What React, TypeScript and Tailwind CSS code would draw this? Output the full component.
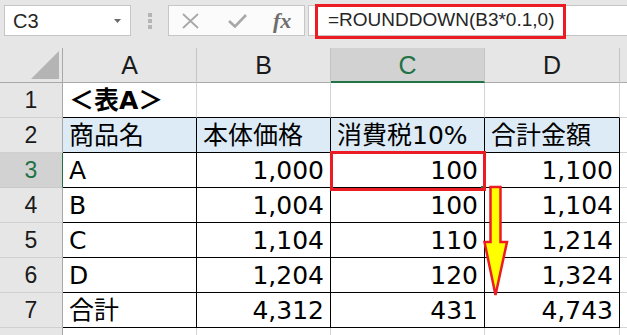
import React from "react";

type Cell = { text?: string; right?: boolean; bold?: boolean };

const cellFont = "font-['DejaVu_Sans','Noto_Sans_CJK_JP',sans-serif]";

const colWidths = ["w-[134px]", "w-[134px]", "w-[154px]", "w-[135px]"];
const colLetters = ["A", "B", "C", "D"];

const rows: { n: number; cells: Cell[] }[] = [
    { n: 1, cells: [{ text: "＜表A＞", bold: true }, {}, {}, {}] },
    {
        n: 2,
        cells: [
            { text: "商品名" },
            { text: "本体価格" },
            { text: "消費税10%" },
            { text: "合計金額" },
        ],
    },
    {
        n: 3,
        cells: [
            { text: "A" },
            { text: "1,000", right: true },
            { text: "100", right: true },
            { text: "1,100", right: true },
        ],
    },
    {
        n: 4,
        cells: [
            { text: "B" },
            { text: "1,004", right: true },
            { text: "100", right: true },
            { text: "1,104", right: true },
        ],
    },
    {
        n: 5,
        cells: [
            { text: "C" },
            { text: "1,104", right: true },
            { text: "110", right: true },
            { text: "1,214", right: true },
        ],
    },
    {
        n: 6,
        cells: [
            { text: "D" },
            { text: "1,204", right: true },
            { text: "120", right: true },
            { text: "1,324", right: true },
        ],
    },
    {
        n: 7,
        cells: [
            { text: "合計" },
            { text: "4,312", right: true },
            { text: "431", right: true },
            { text: "4,743", right: true },
        ],
    },
];

function FormulaBar() {
    return (
        <div className="flex h-[48px] items-start pt-[5px] pl-[4px]">
            {/* name box */}
            <div className="flex h-[31px] w-[127px] items-center justify-between border border-[#c6c6c6] bg-white pl-[8px] pr-[9px]">
                <span className="font-['Liberation_Sans',sans-serif] text-[20px] text-[#262626]">
                    C3
                </span>
                <svg width="7" height="4" viewBox="0 0 7 4">
                    <polygon points="0,0 7,0 3.5,4" fill="#6b6b6b" />
                </svg>
            </div>
            <div className="flex h-[31px] w-[37px] flex-col items-center justify-center gap-[2px]">
                <div className="h-[4px] w-[4px] bg-[#b5b5b5]" />
                <div className="h-[4px] w-[4px] bg-[#b5b5b5]" />
                <div className="h-[4px] w-[4px] bg-[#b5b5b5]" />
            </div>
            {/* cancel / enter / fx */}
            <div className="flex h-[31px] w-[137px] items-center border border-[#c6c6c6] bg-[#fbfbfb]">
                <svg className="ml-[13px]" width="17" height="16" viewBox="0 0 17 16">
                    <path d="M1 1 L16 15 M16 1 L1 15" stroke="#a8a8a8" strokeWidth="1.8" />
                </svg>
                <svg className="ml-[29px]" width="19" height="14" viewBox="0 0 19 14">
                    <path d="M1 7 L7 12.5 L18 1" stroke="#a8a8a8" strokeWidth="2.6" fill="none" />
                </svg>
                <span className="ml-[26px] font-['Liberation_Serif',serif] text-[22px] font-bold italic leading-none text-[#6e6e6e]">
                    fx
                </span>
            </div>
            <div className="ml-[3px] flex h-[31px] flex-1 items-center border border-r-0 border-[#c6c6c6] bg-white pl-[19px]">
                <span className="font-['Liberation_Sans',sans-serif] text-[19px] text-[#262626]">
                    =ROUNDDOWN(B3*0.1,0)
                </span>
            </div>
        </div>
    );
}

function ColumnHeaders() {
    return (
        <div className="flex h-[35px]">
            <div className="relative h-[35px] w-[63px] border-r border-b border-[#a8a8a8]">
                <svg className="absolute right-[3px] bottom-[3px]" width="28" height="28" viewBox="0 0 28 28">
                    <polygon points="28,0 28,28 0,28" fill="#b4b4b4" />
                </svg>
            </div>
            {colLetters.map((l, i) =>
                l === "C" ? (
                    <div
                        key={l}
                        className={`${colWidths[i]} flex h-[35px] items-center justify-center border-r border-b-2 border-r-[#c4c4c4] border-b-[#217346] bg-[#d2d2d2] pt-[2px] font-['Liberation_Sans',sans-serif] text-[25px] text-[#217346]`}
                    >
                        {l}
                    </div>
                ) : (
                    <div
                        key={l}
                        className={`${colWidths[i]} flex h-[35px] items-center justify-center border-r border-b border-r-[#c4c4c4] border-b-[#ababab] pt-[2px] font-['Liberation_Sans',sans-serif] text-[25px] text-[#1a1a1a]`}
                    >
                        {l}
                    </div>
                )
            )}
            <div className="h-[35px] flex-1 border-b border-[#ababab]" />
        </div>
    );
}

function SheetRow({ n, cells }: { n: number; cells: Cell[] }) {
    const inTable = n >= 2;
    const active = n === 3;
    return (
        <div className="flex h-[35px]">
            <div
                className={
                    active
                        ? "flex h-[35px] w-[63px] items-center justify-center border-r border-b border-r-[#217346] border-b-[#c8c8c8] bg-[#d2d2d2] pt-[1px] font-['Liberation_Sans',sans-serif] text-[23px] text-[#217346]"
                        : "flex h-[35px] w-[63px] items-center justify-center border-r border-b border-r-[#a8a8a8] border-b-[#d0d0d0] pt-[1px] font-['Liberation_Sans',sans-serif] text-[23px] text-[#1a1a1a]"
                }
            >
                {n}
            </div>
            {cells.map((c, i) => (
                <div
                    key={i}
                    className={`${colWidths[i]} flex h-[35px] items-center overflow-hidden whitespace-nowrap border-r border-b border-b-black px-[6px] pt-[2px] ${cellFont} text-[25px] text-black ${
                        inTable ? "border-r-black" : "border-r-[#d4d4d4]"
                    } ${n === 2 ? "bg-[#ddebf7]" : "bg-white"} ${c.right ? "justify-end" : "justify-start"} ${
                        c.bold ? "font-bold" : ""
                    }`}
                >
                    {c.text}
                </div>
            ))}
            <div className="h-[35px] flex-1 border-b border-[#d4d4d4] bg-white" />
        </div>
    );
}

export default function App() {
    return (
        <div className="relative h-[335px] w-[627px] overflow-hidden bg-[#e6e6e6]">
            <FormulaBar />
            <ColumnHeaders />
            {rows.map((r) => (
                <SheetRow key={r.n} n={r.n} cells={r.cells} />
            ))}
            {/* row 8, cut off at the bottom */}
            <div className="flex h-[10px]">
                <div className="w-[63px] border-r border-[#a8a8a8]" />
                {colWidths.map((w, i) => (
                    <div key={i} className={`${w} border-r border-[#d4d4d4] bg-white`} />
                ))}
                <div className="flex-1 bg-white" />
            </div>

            {/* active cell */}
            <div className="absolute left-[330px] top-[152px] h-[38px] w-[156px] border-2 border-[#217346]" />
            <div className="absolute left-[481px] top-[186px] h-[5px] w-[5px] bg-[#217346]" />

            {/* callouts */}
            <div className="absolute left-[315px] top-[4px] h-[35px] w-[251px] border-[3px] border-[#ec1c24]" />
            <div className="absolute left-[330px] top-[151px] h-[40px] w-[156px] border-[3px] border-[#ec1c24]" />
            <svg className="absolute left-[482px] top-[185px]" width="28" height="113" viewBox="0 0 28 113">
                <polygon
                    points="8.5,2 18.5,2 18.5,57 25,57 13.5,110 2.5,57 8.5,57"
                    fill="#ffff00"
                    stroke="#ec1c24"
                    strokeWidth="2.5"
                    strokeLinejoin="miter"
                />
            </svg>
        </div>
    );
}
